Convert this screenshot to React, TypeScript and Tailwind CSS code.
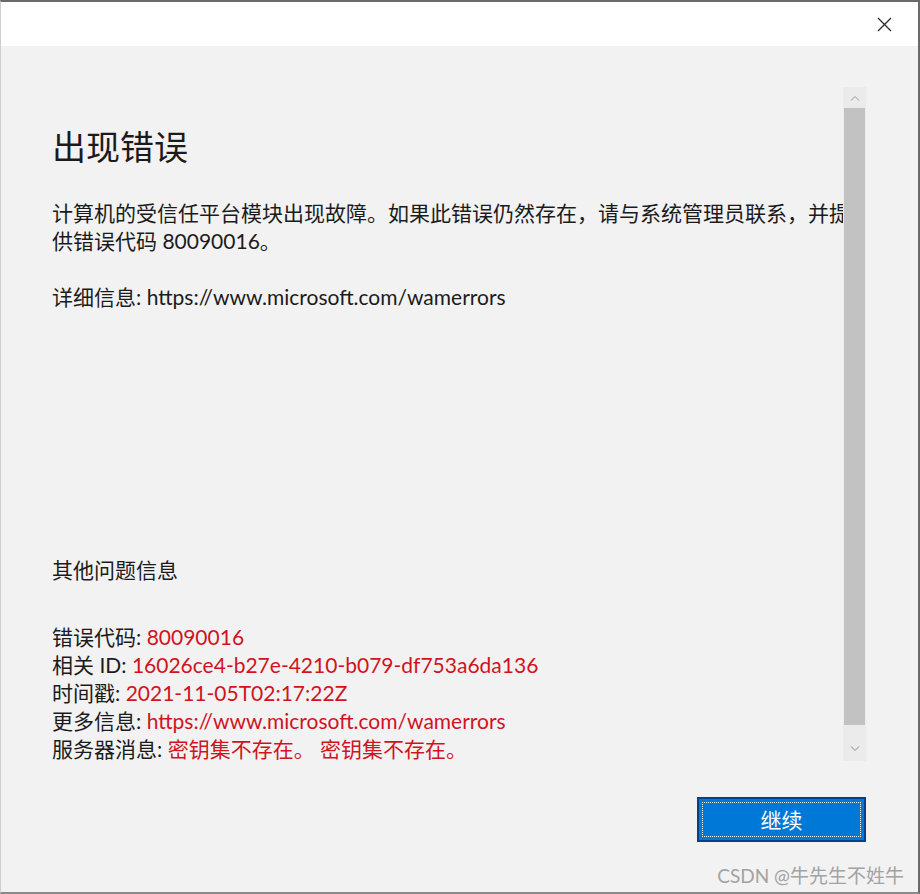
import { ReactNode } from "react";

const font = { fontFamily: 'Lato, "Noto Sans CJK SC", sans-serif' };

const InfoRow = ({ label, value }: { label: string; value: ReactNode }) => (
  <p className="leading-[28px] whitespace-nowrap">
    {label} <span className="text-[#d0141d]">{value}</span>
  </p>
);

const ScrollBar = () => (
  <div className="flex w-[23px] flex-col bg-[#ebebeb]">
    <div className="flex h-[21px] items-center justify-center">
      <svg width="10" height="6" viewBox="0 0 10 6">
        <path d="M1 5.5 L5 1.5 L9 5.5" fill="none" stroke="#9a9a9a" strokeWidth="1" />
      </svg>
    </div>
    <div className="mx-[1px] h-[617px] bg-[#c2c2c2]" />
    <div className="flex-1" />
    <div className="flex h-[24px] items-center justify-center">
      <svg width="10" height="6" viewBox="0 0 10 6">
        <path d="M1 0.5 L5 4.5 L9 0.5" fill="none" stroke="#8a8a8a" strokeWidth="1" />
      </svg>
    </div>
  </div>
);

export default function App() {
  return (
    <div
      className="relative flex h-[894px] w-[920px] flex-col border-t-2 border-r-2 border-b-2 border-l border-t-[#6a6a6a] border-r-[#6a6a6a] border-b-[#8a8a8a] border-l-[#cfcfcf] text-[#1b1b1b]"
      style={font}
    >
      <div className="flex h-[44px] items-center justify-end bg-white pr-[26px]">
        <svg width="15" height="15" viewBox="0 0 15 15">
          <path d="M1 1 L14 14 M14 1 L1 14" stroke="#2b2b2b" strokeWidth="1.3" />
        </svg>
      </div>

      <div className="flex flex-1 flex-col bg-[#f2f2f2]">
        <div className="mt-[41px] flex h-[674px] pr-[52px]">
          <div className="min-w-0 flex-1 pl-[51px] pt-[38px] text-[21px]">
            <h1 className="text-[34px] leading-[44px] font-normal">出现错误</h1>
            <div className="mt-[30px] overflow-hidden">
              <p className="w-[800px] leading-[28px]">
                计算机的受信任平台模块出现故障。如果此错误仍然存在，请与系统管理员联系，并提供错误代码 80090016。
              </p>
            </div>
            <p className="mt-[28px] leading-[28px]">详细信息: https://www.microsoft.com/wamerrors</p>

            <p className="mt-[245px] leading-[28px]">其他问题信息</p>

            <div className="mt-[39px]">
              <InfoRow label="错误代码:" value="80090016" />
              <InfoRow label="相关 ID:" value="16026ce4-b27e-4210-b079-df753a6da136" />
              <InfoRow label="时间戳:" value="2021-11-05T02:17:22Z" />
              <InfoRow label="更多信息:" value="https://www.microsoft.com/wamerrors" />
              <InfoRow label="服务器消息:" value="密钥集不存在。 密钥集不存在。" />
            </div>
          </div>
          <ScrollBar />
        </div>

        <div className="mt-[36px] flex justify-end pr-[52px]">
          <button className="h-[45px] w-[169px] border-2 border-[#00418c] bg-[#0078d7] p-[3px]">
            <span className="flex h-full w-full items-center justify-center border border-dotted border-white text-[21px] text-white">
              继续
            </span>
          </button>
        </div>
      </div>

      <span className="absolute right-[14px] bottom-[2px] text-[19px] text-[#a3a3a3]">
        CSDN @牛先生不姓牛
      </span>
    </div>
  );
}
